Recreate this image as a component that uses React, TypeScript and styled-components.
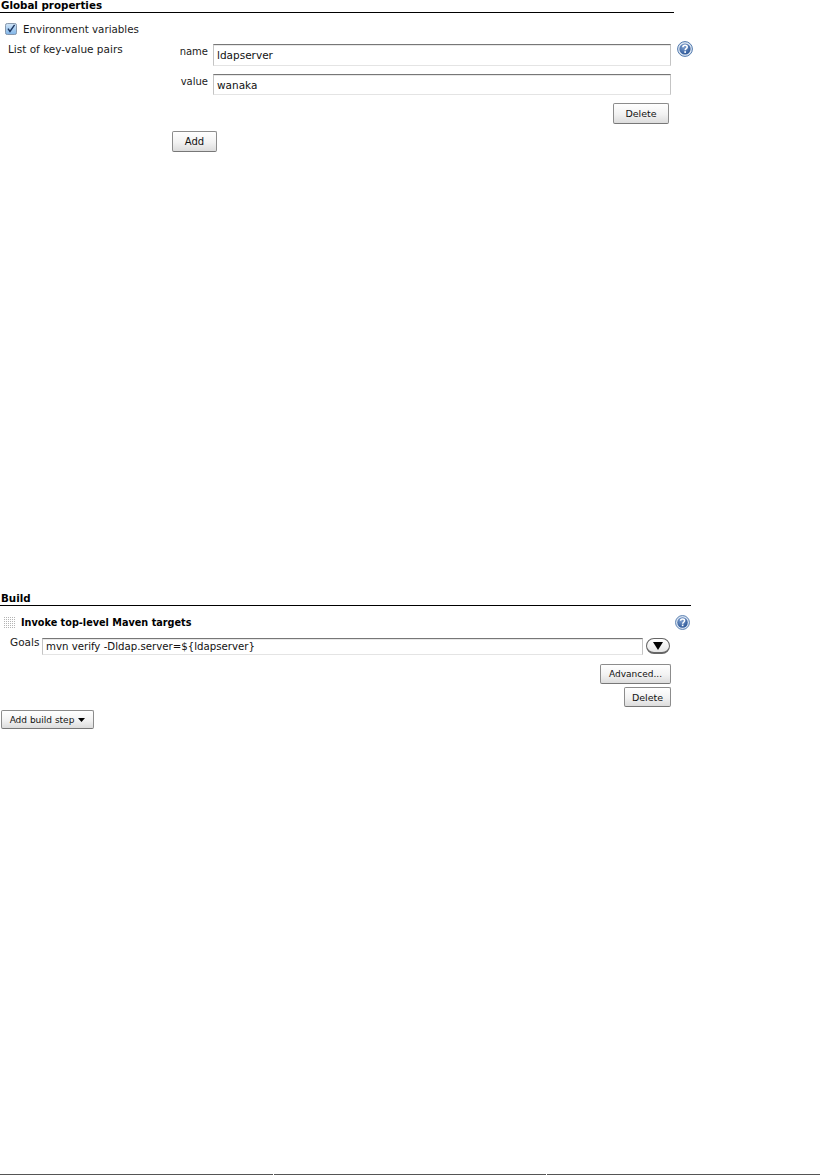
import * as React from "react";
import styled, { createGlobalStyle } from "styled-components";

const GlobalStyle = createGlobalStyle`
  html, body {
    margin: 0;
    padding: 0;
    background: #fff;
  }
  body {
    font-family: "DejaVu Sans", Verdana, sans-serif;
    font-size: 10.5px;
    color: #1a1a1a;
  }
`;

const HelpIcon = ({ size }: { size: number }) => (
  <svg width={size} height={size} viewBox="0 0 16 16">
    <defs>
      <radialGradient id="helpFill" cx="40%" cy="30%" r="80%">
        <stop offset="0%" stopColor="#7fa0cf" />
        <stop offset="100%" stopColor="#234f92" />
      </radialGradient>
    </defs>
    <circle cx="8" cy="8" r="7.4" fill="#dfe8f3" stroke="#4f78ad" strokeWidth="1" />
    <circle cx="8" cy="8" r="5.6" fill="url(#helpFill)" />
    <path d="M5.9 6.2c0-1.2 1-1.9 2.2-1.9s2.1.7 2.1 1.8c0 1.6-2 1.6-2 3.1" fill="none" stroke="#fff" strokeWidth="1.6" />
    <rect x="7.3" y="10.2" width="1.7" height="1.7" fill="#fff" />
  </svg>
);

const CheckIcon = () => (
  <svg width="12" height="12" viewBox="0 0 13 13">
    <defs>
      <linearGradient id="checkFill" x1="0" y1="0" x2="0" y2="1">
        <stop offset="0%" stopColor="#d3e6f8" />
        <stop offset="100%" stopColor="#7fb4e8" />
      </linearGradient>
    </defs>
    <rect x="0.5" y="0.5" width="12" height="12" rx="2" fill="url(#checkFill)" stroke="#7d8ea3" />
    <path d="M3.2 6l2.2 3.2L10.4 2" fill="none" stroke="#1c3560" strokeWidth="1.5" />
  </svg>
);

const DragHandle = () => (
  <svg width="11" height="11" viewBox="0 0 11 11">
    {[0, 1, 2, 3, 4, 5].map((r) =>
      [0, 1, 2, 3, 4, 5].map((c) => (
        <rect key={`${r}-${c}`} x={c * 2} y={r * 2} width="1" height="1" fill="#b4b4b4" />
      ))
    )}
  </svg>
);

const Page = styled.div`
  height: 1175px;
  width: 820px;
  display: flex;
  flex-direction: column;
  overflow: hidden;
`;

const Section = styled.section<{ $height: number; $width: number }>`
  height: ${(p) => p.$height}px;
  width: ${(p) => p.$width}px;
  flex: none;
`;

const Heading = styled.h2`
  margin: 0;
  height: 12px;
  font-size: 10.3px;
  line-height: 11px;
  font-weight: bold;
  color: #000;
  padding-left: 1px;
  border-bottom: 1px solid #000;
`;

const CheckRow = styled.label`
  display: flex;
  align-items: center;
  gap: 6px;
  margin-top: 9px;
  padding-left: 5px;
  height: 14px;
  font-size: 10.3px;
`;

const PairsRow = styled.div`
  display: flex;
  margin-top: 8px;
  width: 694px;
`;

const PairsLabel = styled.div`
  width: 172px;
  flex: none;
  padding-left: 8px;
  box-sizing: border-box;
  line-height: 13px;
  margin-top: -1px;
`;

const PairsBody = styled.div`
  flex: 1;
  display: flex;
  flex-direction: column;
`;

const FieldRow = styled.div<{ $gap: number }>`
  display: flex;
  align-items: flex-start;
  margin-bottom: ${(p) => p.$gap}px;
`;

const FieldLabel = styled.span`
  width: 41px;
  flex: none;
  text-align: right;
  padding-right: 5px;
  box-sizing: border-box;
  line-height: 13px;
  padding-top: 1px;
  font-size: 10px;
`;

const TextBox = styled.div<{ $width: number; $height: number; $size?: number }>`
  width: ${(p) => p.$width}px;
  height: ${(p) => p.$height}px;
  box-sizing: border-box;
  border-style: solid;
  border-width: 1px;
  border-color: #777 #c4c4c4 #e4e4e4 #c4c4c4;
  box-shadow: inset 0 1px 0 #e8e8e8;
  padding-left: 3px;
  display: flex;
  align-items: center;
  color: #111;
  background: #fff;
  white-space: nowrap;
  overflow: hidden;
  font-size: ${(p) => p.$size ?? 10.5}px;
`;

const HelpSlot = styled.span`
  margin-left: 6px;
  margin-top: -3px;
  height: 16px;
`;

const Button = styled.button<{ $width: number; $height: number; $size?: number }>`
  width: ${(p) => p.$width}px;
  height: ${(p) => p.$height}px;
  flex: none;
  padding: 0;
  font-family: inherit;
  font-size: ${(p) => p.$size ?? 9.5}px;
  color: #111;
  border: 1px solid #8c8c8c;
  border-bottom-color: #777;
  border-radius: 2px;
  background: linear-gradient(#ffffff, #f2f2f2 55%, #dcdcdc);
  display: inline-flex;
  align-items: center;
  justify-content: center;
  gap: 4px;
`;

const RightAligned = styled.div<{ $right: number; $top: number }>`
  display: flex;
  justify-content: flex-end;
  padding-right: ${(p) => p.$right}px;
  margin-top: ${(p) => p.$top}px;
`;

const AddSlot = styled.div`
  display: flex;
  margin-top: 7px;
`;

const StepHeader = styled.div`
  display: flex;
  align-items: center;
  margin-top: 8px;
  height: 16px;
  width: 690px;
  padding-left: 4px;
  box-sizing: border-box;
`;

const StepTitle = styled.strong`
  margin-left: 6px;
  flex: 1;
  color: #000;
  font-size: 9.7px;
`;

const GoalsRow = styled.div`
  display: flex;
  align-items: flex-start;
  margin-top: 8px;
  padding-left: 10px;
`;

const GoalsLabel = styled.span`
  width: 32px;
  flex: none;
  line-height: 13px;
  margin-top: -2px;
`;

const DropButton = styled.button`
  width: 24px;
  height: 16px;
  margin-left: 3px;
  padding: 0;
  border: 1px solid #666;
  border-bottom-width: 2px;
  border-radius: 8px;
  background: linear-gradient(#fff, #e6e6e6);
  display: flex;
  align-items: center;
  justify-content: center;
`;

const AddStepSlot = styled.div`
  display: flex;
  margin-top: 3px;
  padding-left: 1px;
`;

const FooterRule = styled.div`
  margin-top: auto;
  display: flex;
  gap: 1px;
  height: 1px;
`;

const RuleSegment = styled.div`
  flex: 1;
  background: #555;
`;

export default function App() {
  return (
    <Page>
      <GlobalStyle />

      <Section $height={593} $width={674}>
        <Heading>Global properties</Heading>
        <CheckRow>
          <CheckIcon />
          <span>Environment variables</span>
        </CheckRow>
        <PairsRow>
          <PairsLabel>List of key-value pairs</PairsLabel>
          <PairsBody>
            <FieldRow $gap={8}>
              <FieldLabel>name</FieldLabel>
              <TextBox $width={458} $height={22}>ldapserver</TextBox>
              <HelpSlot><HelpIcon size={16} /></HelpSlot>
            </FieldRow>
            <FieldRow $gap={0}>
              <FieldLabel>value</FieldLabel>
              <TextBox $width={458} $height={21}>wanaka</TextBox>
            </FieldRow>
            <RightAligned $right={25} $top={8}>
              <Button $width={56} $height={21}>Delete</Button>
            </RightAligned>
            <AddSlot>
              <Button $width={45} $height={21} $size={10}>Add</Button>
            </AddSlot>
          </PairsBody>
        </PairsRow>
      </Section>

      <Section $height={581} $width={691}>
        <Heading>Build</Heading>
        <StepHeader>
          <DragHandle />
          <StepTitle>Invoke top-level Maven targets</StepTitle>
          <HelpIcon size={15} />
        </StepHeader>
        <GoalsRow>
          <GoalsLabel>Goals</GoalsLabel>
          <TextBox $width={601} $height={17} $size={10.2}>mvn verify -Dldap.server=${"{"}ldapserver{"}"}</TextBox>
          <DropButton>
            <svg width="10" height="8" viewBox="0 0 10 8">
              <path d="M0 0h10L5 8z" fill="#000" />
            </svg>
          </DropButton>
        </GoalsRow>
        <RightAligned $right={20} $top={9}>
          <Button $width={71} $height={20} $size={9}>Advanced...</Button>
        </RightAligned>
        <RightAligned $right={20} $top={3}>
          <Button $width={47} $height={20}>Delete</Button>
        </RightAligned>
        <AddStepSlot>
          <Button $width={93} $height={19} $size={9}>
            Add build step
            <svg width="7" height="4" viewBox="0 0 7 4">
              <path d="M0 0h7L3.5 4z" fill="#000" />
            </svg>
          </Button>
        </AddStepSlot>
      </Section>

      <FooterRule>
        <RuleSegment />
        <RuleSegment />
        <RuleSegment />
      </FooterRule>
    </Page>
  );
}
